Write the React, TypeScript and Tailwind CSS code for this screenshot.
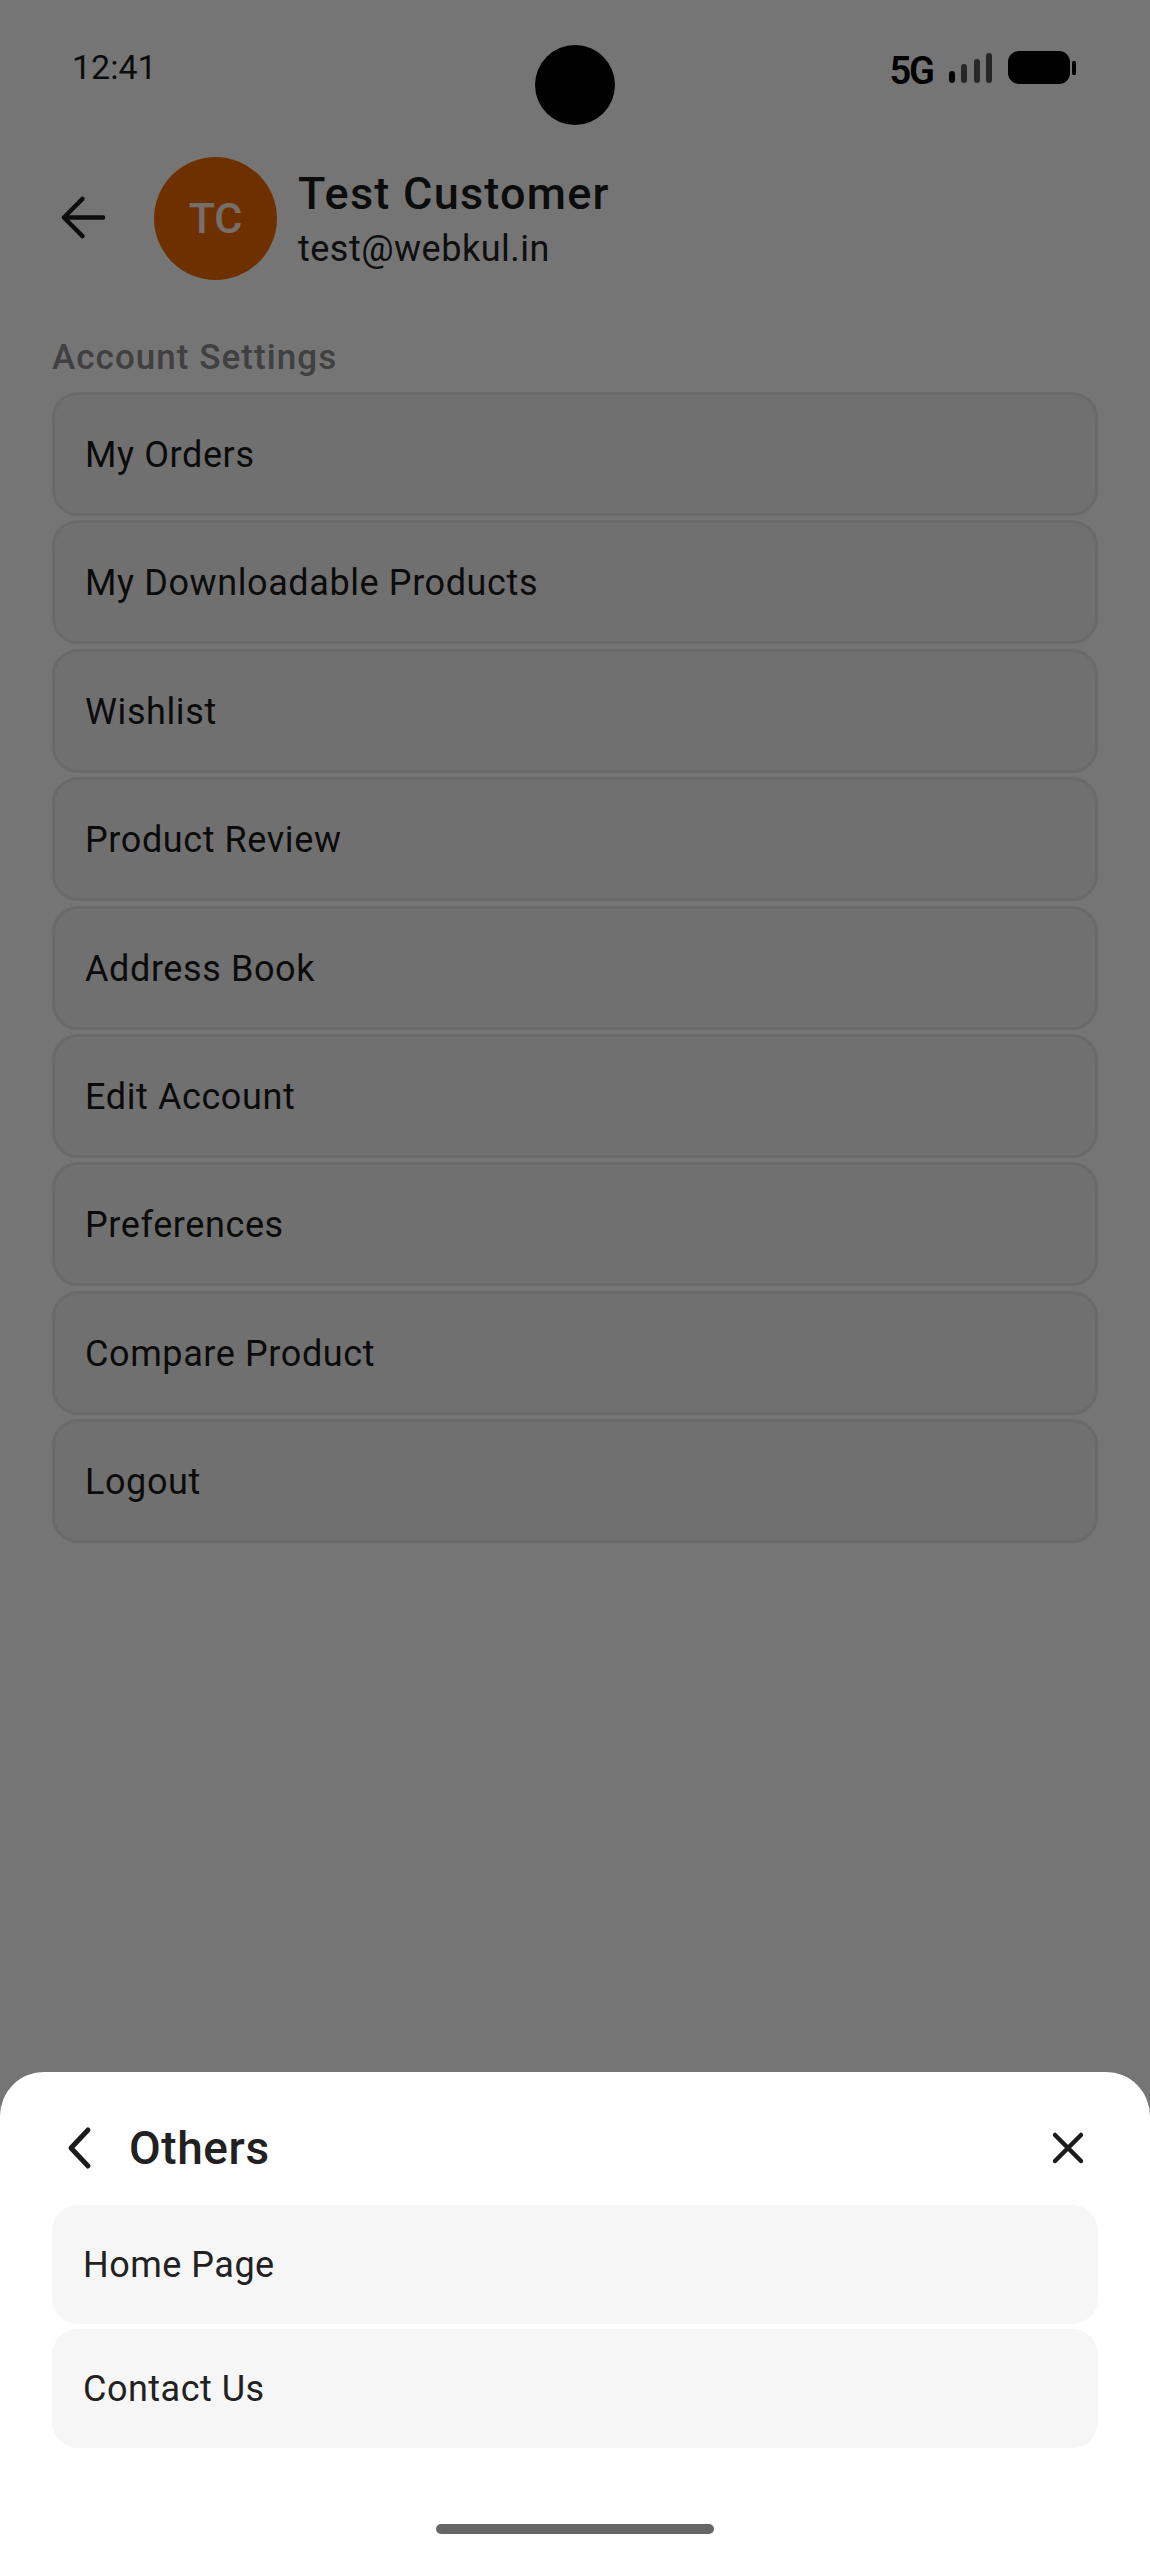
import * as React from 'react';

const accountItems = [
  'My Orders',
  'My Downloadable Products',
  'Wishlist',
  'Product Review',
  'Address Book',
  'Edit Account',
  'Preferences',
  'Compare Product',
  'Logout',
];

const otherItems = ['Home Page', 'Contact Us'];

const StatusIcons: React.FC = () => (
  <div className="flex items-center pt-[2px]">
    <span className="text-[38px] leading-[37px] font-semibold tracking-[-2px] text-black">5G</span>
    <svg width="150" height="40" viewBox="0 0 150 40" className="ml-[13px]">
      <rect x="3" y="20" width="6" height="12" rx="3" fill="#111" />
      <rect x="15" y="13" width="6" height="19" rx="3" fill="#555" />
      <rect x="28" y="8" width="6" height="24" rx="3" fill="#555" />
      <rect x="40" y="2" width="6" height="30" rx="3" fill="#555" />
      <rect x="62" y="0" width="62" height="33" rx="11" fill="#000" />
      <rect x="126" y="10" width="4" height="14" rx="1.5" fill="#000" />
    </svg>
  </div>
);

const App: React.FC = () => {
  return (
    <div className="relative w-[1150px] h-[2560px] overflow-hidden bg-white font-['Roboto',sans-serif]">
      {/* page behind the sheet */}
      <div className="flex items-start justify-between pl-[72px] pr-[54px] pt-[49px] h-[156px]">
        <span className="text-[34px] leading-[36px] text-[#1c1c1c]">12:41</span>
        <StatusIcons />
      </div>

      <div className="flex items-center pl-[54px] h-[124px]">
        <svg width="52" height="52" viewBox="0 0 52 52" fill="none" className="shrink-0">
          <path d="M47 26H8M26 7 7 26l19 19" stroke="#1c1c1c" strokeWidth="4.5" strokeLinecap="round" strokeLinejoin="round" transform="translate(3 0) scale(.98)" />
        </svg>
        <div className="ml-[48px] flex h-[123px] w-[123px] items-center justify-center rounded-full bg-[#f26a00]">
          <span className="text-[43px] font-medium text-white/90">TC</span>
        </div>
        <div className="ml-[21px] flex flex-col pt-[3px]">
          <span className="text-[45px] leading-[50px] font-medium tracking-[1.25px] text-[#1c1c1c]">Test Customer</span>
          <span className="mt-[8px] text-[36px] leading-[44px] tracking-[.5px] text-[#222]">test@webkul.in</span>
        </div>
      </div>

      <div className="px-[52px] pt-[58px]">
        <h2 className="text-[35px] leading-[40px] font-medium tracking-[1.05px] text-[#8c8c8c]">Account Settings</h2>
        <div className="mt-[14px] flex flex-col gap-[4.4px]">
          {accountItems.map((item) => (
            <div
              key={item}
              className="flex h-[124px] items-center rounded-[26px] border-[3px] border-[#e6e6e6] bg-[#f3f3f3] pl-[30px]"
            >
              <span className="pt-[2px] text-[36px] tracking-[.6px] text-[#1a1a1a]">{item}</span>
            </div>
          ))}
        </div>
      </div>

      {/* modal barrier */}
      <div className="absolute inset-0 bg-black/54" />

      {/* camera cutout */}
      <div className="absolute left-[535px] top-[45px] h-[80px] w-[80px] rounded-full bg-black" />

      {/* bottom sheet */}
      <div className="absolute inset-x-0 bottom-0 h-[488px] rounded-t-[44px] bg-white px-[52px]">
        <div className="flex h-[133px] items-center justify-between pt-[18px]">
          <div className="flex items-center">
            <svg width="40" height="44" viewBox="0 0 40 44" fill="none" className="ml-[9px]">
              <path d="M27 4 10 22l17 18" stroke="#1c1c1c" strokeWidth="5" strokeLinecap="round" strokeLinejoin="round" />
            </svg>
            <span className="ml-[28px] pt-[2px] text-[46px] font-medium tracking-[.6px] text-[#212121]">Others</span>
          </div>
          <svg width="36" height="36" viewBox="0 0 36 36" fill="none" className="mr-[12px]">
            <path d="M5 5l26 26M31 5 5 31" stroke="#1c1c1c" strokeWidth="4.5" strokeLinecap="round" />
          </svg>
        </div>
        <div className="flex flex-col gap-[5px]">
          {otherItems.map((item) => (
            <div key={item} className="flex h-[119px] items-center rounded-[26px] bg-[#f6f6f6] pl-[31px]">
              <span className="text-[36px] tracking-[.5px] text-[#212121]">{item}</span>
            </div>
          ))}
        </div>
      </div>

      {/* gesture bar */}
      <div className="absolute bottom-[26px] left-[436px] h-[10px] w-[278px] rounded-full bg-[#666]" />
    </div>
  );
};

export default App;
